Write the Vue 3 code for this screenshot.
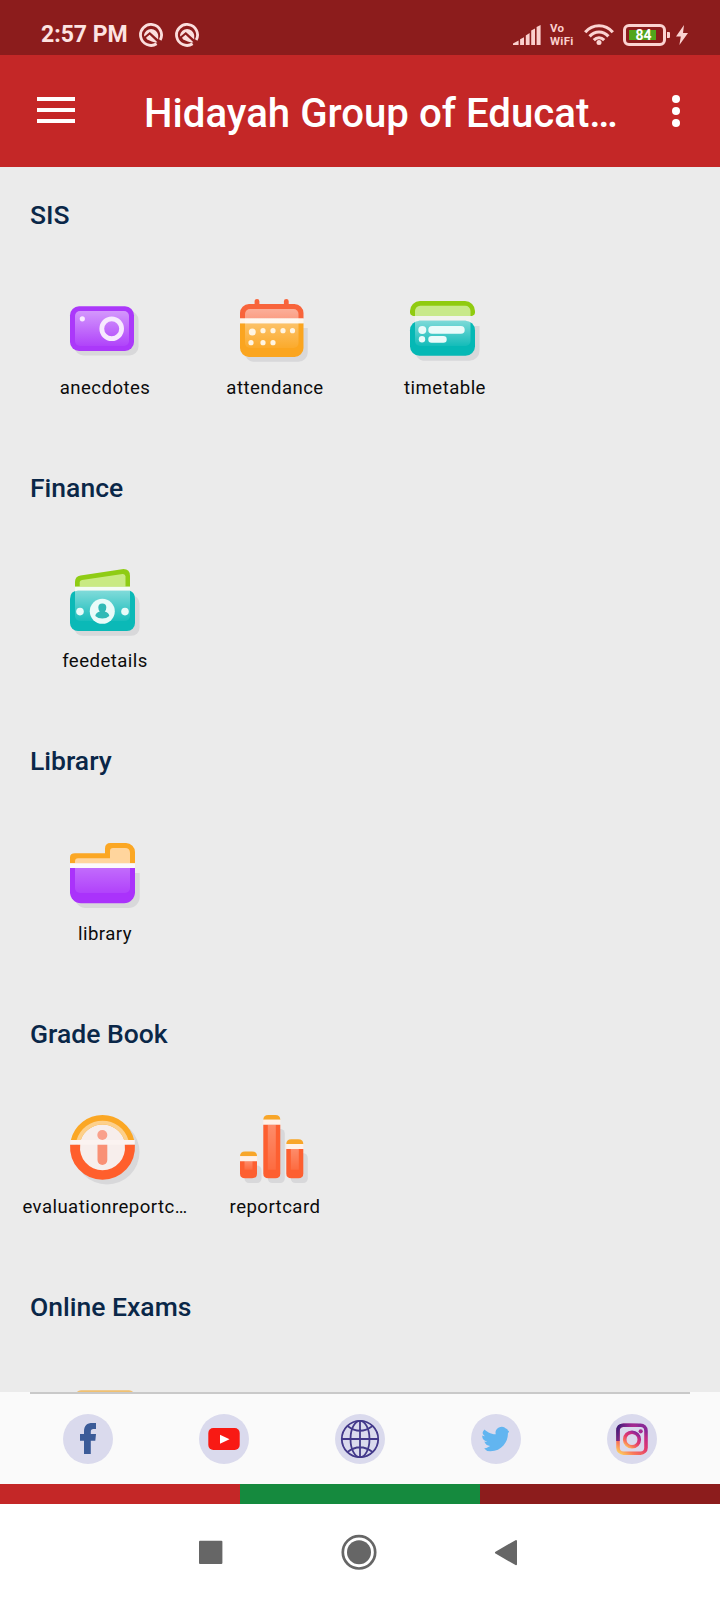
<template>
  <div class="phone">
    <div class="status-bar">
      <span class="clock">2:57 PM</span>
      <svg v-for="n in 2" :key="n" class="badge-icon" viewBox="0 0 24 24">
        <path d="M17.6 20.8A10.5 10.5 0 1 1 21.2 17" fill="none" stroke="#fbdedd" stroke-width="2.8" />
        <path d="M5 12A7.2 7.2 0 0 1 19.2 12V16.6L10.8 9L5.4 13.4Z" fill="#fbdedd" />
        <path d="M7 14.8L10.6 11.8L18.4 19.2Q15 19.8 12.8 18.6L8.2 16.6Z" fill="#fbdedd" />
      </svg>
      <div class="spacer"></div>
      <svg class="signal" viewBox="0 0 28 20">
        <path d="M0 20V18.6L5.6 15.6V20ZM7.1 20V14.2L11 12.2V20ZM12.8 20V10.4L16.6 8V20ZM18.2 20V5.6L22 3.4V20ZM23.6 20V2L27.6 0V20Z" fill="#fbcfcd" />
      </svg>
      <div class="vowifi"><span>Vo</span><span>WiFi</span></div>
      <svg class="wifi" viewBox="0 0 30 21">
        <g fill="none" stroke="#fbd3d1" stroke-width="3.1">
          <path d="M1.2 8.2C8.8 -0.4 21.2 -0.4 28.8 8.2" />
          <path d="M5.6 12.4C10.8 6.6 19.2 6.6 24.4 12.4" />
          <path d="M9.8 16.2C12.9 13 17.1 13 20.2 16.2" />
        </g>
        <circle cx="15" cy="18.5" r="2.5" fill="#fbd3d1" />
      </svg>
      <div class="battery">
        <div class="battery-body"><div class="battery-level">84</div></div>
        <div class="battery-cap"></div>
      </div>
      <svg class="bolt" viewBox="0 0 12 20">
        <path d="M8 0L0 11.6H4.8L3.4 20L12 8H7Z" fill="#fbd3d1" />
      </svg>
    </div>

    <header class="app-bar">
      <button class="menu" aria-label="Menu"><i></i><i></i><i></i></button>
      <h1>Hidayah Group of Educat…</h1>
      <button class="more" aria-label="More"><i></i><i></i><i></i></button>
    </header>

    <svg class="defs" width="0" height="0">
      <defs>
        <linearGradient id="glass" x1="0" y1="0" x2="0" y2="1">
          <stop offset="0" stop-color="#fff" stop-opacity=".48" />
          <stop offset="1" stop-color="#fff" stop-opacity=".06" />
        </linearGradient>
        <linearGradient id="glassSoft" x1="0" y1="0" x2="0" y2="1">
          <stop offset="0" stop-color="#fff" stop-opacity=".28" />
          <stop offset="1" stop-color="#fff" stop-opacity=".08" />
        </linearGradient>
        <linearGradient id="insta" x1="0" y1="1" x2=".7" y2="0">
          <stop offset="0" stop-color="#ffd45e" />
          <stop offset=".25" stop-color="#f9795a" />
          <stop offset=".55" stop-color="#e33c6c" />
          <stop offset=".85" stop-color="#c02b88" />
          <stop offset="1" stop-color="#8c2a96" />
        </linearGradient>
        <linearGradient id="instaFrame" x1="0" y1="0" x2="1" y2=".35">
          <stop offset="0" stop-color="#3b1d78" />
          <stop offset=".5" stop-color="#8a2592" stop-opacity=".85" />
          <stop offset="1" stop-color="#c22e8c" stop-opacity="0" />
        </linearGradient>
      </defs>
    </svg>

    <main class="content">
      <section v-for="group in groups" :key="group.title" class="group">
        <h2>{{ group.title }}</h2>
        <div class="tiles">
          <div v-for="item in group.items" :key="item.label" class="tile">
            <svg v-if="item.icon === 'camera'" class="tile-icon" viewBox="0 0 70 70">
              <rect class="shade" x="4.5" y="15" width="64" height="44.5" rx="9" />
              <rect x="0" y="10.3" width="64" height="44.7" rx="9" fill="#ab38fa" />
              <rect x="5" y="15" width="54" height="35" rx="5" fill="url(#glass)" />
              <circle cx="41.7" cy="32.7" r="9.9" fill="none" stroke="#f7e9fe" stroke-width="4.8" />
              <circle cx="12.3" cy="22.8" r="2.6" fill="#f9eaff" />
            </svg>

            <svg v-else-if="item.icon === 'calendar'" class="tile-icon" viewBox="0 0 70 70">
              <path class="shade" d="M63 32H67.7V56.7A9 9 0 0 1 58.7 65.7H13A9 9 0 0 1 6 61Z" />
              <path d="M17 9V5.3M46.3 9V5.3" stroke="#f8643b" stroke-width="4.8" stroke-linecap="round" />
              <path d="M0 22.5V17A9 9 0 0 1 9 8H54.5A9 9 0 0 1 63.5 17V22.5Z" fill="#f8643b" />
              <path d="M0 27.3H63.5V52A9 9 0 0 1 54.5 61H9A9 9 0 0 1 0 52Z" fill="#fba51f" />
              <path d="M0 22.5H63.5V27.3H0Z" fill="#fff5e9" />
              <rect x="5" y="13" width="53.5" height="39" rx="5" fill="url(#glass)" />
              <g fill="#fff5e3">
                <circle cx="12.3" cy="36" r="3.5" />
                <circle v-for="x in [23, 33, 43, 52.5]" :key="x" :cx="x" cy="34.7" r="2.6" />
                <circle v-for="x in [11, 23, 33]" :key="x" :cx="x" cy="46.7" r="2.6" />
              </g>
            </svg>

            <svg v-else-if="item.icon === 'schedule'" class="tile-icon" viewBox="0 0 70 70">
              <path class="shade" d="M64 30H69.5V54.7A10 10 0 0 1 59.5 64.7H13A10 10 0 0 1 6 59Z" />
              <path d="M0 17V15A10 10 0 0 1 10 5H55A10 10 0 0 1 65 15V17Q65 19 62 20H3Q0 19 0 17Z" fill="#90cb10" />
              <path d="M5 20V15A5.2 5.2 0 0 1 10.2 9.8H55A5.2 5.2 0 0 1 60.5 15V20Z" fill="#c8e98a" />
              <path d="M5 20H60.5V26H5Z" fill="#f1f2ee" />
              <rect x="0" y="24.7" width="65" height="35" rx="9.5" fill="#05b8b5" />
              <path d="M5 24.7H60.5V45A5 5 0 0 1 55.5 50H10A5 5 0 0 1 5 45Z" fill="url(#glass)" />
              <g fill="#eafbfa">
                <circle cx="12.3" cy="34" r="4" />
                <rect x="18.3" y="30" width="36.4" height="7.7" rx="3.8" />
                <circle cx="12" cy="43.3" r="3.2" />
                <rect x="18.3" y="40" width="18.4" height="6.7" rx="3.3" />
              </g>
            </svg>

            <svg v-else-if="item.icon === 'cash'" class="tile-icon" viewBox="0 0 70 70">
              <rect class="shade" x="4.5" y="26.5" width="65" height="40.3" rx="8" />
              <path d="M5 17.7V13Q5 7.4 10.5 6.5L52 0.2Q60 -0.6 60 7V17.7Z" fill="#8fcc14" />
              <path d="M9.7 17.7V13Q10 11.3 12 11L52.5 5Q55.3 4.7 55.5 7.5V17.7Z" fill="#c9ea83" />
              <path d="M5 17.7H60V23H5Z" fill="#f4fbf4" />
              <path d="M8 21.7Q0 21.7 0 30V54A8 8 0 0 0 8 62H57A8 8 0 0 0 65 54V30Q65 23.5 60 21.7Z" fill="#0bb9b7" />
              <path d="M5 21.7H60V47A5 5 0 0 1 55 52H10A5 5 0 0 1 5 47Z" fill="url(#glass)" />
              <g fill="#e9fbf9">
                <circle cx="32.3" cy="42.3" r="12.5" />
                <circle cx="10" cy="42.6" r="3.8" />
                <circle cx="55" cy="42.6" r="3.8" />
              </g>
              <path d="M28.3 38.5A4 4 0 0 1 36.3 38.5Q36.3 41 34.8 42.5Q39 43.5 39.3 47Q36.5 49.6 32.3 49.6T25.3 47Q25.6 43.5 29.8 42.5Q28.3 41 28.3 38.5Z" fill="#31b9b6" />
            </svg>

            <svg v-else-if="item.icon === 'folder'" class="tile-icon" viewBox="0 0 70 70">
              <path class="shade" d="M64 31H69.7V55A11 11 0 0 1 58.7 66H15A11 11 0 0 1 6 60Z" />
              <path d="M0 21.5V15.5Q0 11.3 5 11.3H35V6.5Q35 1 40.5 1H56A9 9 0 0 1 65 10V21.5Z" fill="#fba724" />
              <path d="M5 21.5V19.5Q5 16.3 8 16.3H40V9Q40 6 43 6H55Q60 6 60 11V21.5Z" fill="#ffd59d" />
              <path d="M0 21.3H65V26H0Z" fill="#fcf8fb" />
              <path d="M0 26H65V50.3A11 11 0 0 1 54 61.3H11A11 11 0 0 1 0 50.3Z" fill="#aa32fb" />
              <path d="M5 26H60V46A5 5 0 0 1 55 51H10A5 5 0 0 1 5 46Z" fill="url(#glassSoft)" />
            </svg>

            <svg v-else-if="item.icon === 'info'" class="tile-icon" viewBox="0 0 70 70">
              <circle class="shade" cx="37" cy="37" r="32.5" />
              <circle cx="32.5" cy="32.5" r="25" fill="#f7eeec" />
              <path d="M0.9 25A32.5 32.5 0 0 1 64.1 25H54.2A23 23 0 0 0 10.8 25Z" fill="#fba724" />
              <path d="M6.6 25A27 27 0 0 1 58.4 25H54.2A23 23 0 0 0 10.8 25Z" fill="#fdd08b" />
              <path d="M0.2 25H64.8V29.7H0.2Z" fill="#fbf3f1" />
              <path d="M0.1 29.7H10.2A22.5 22.5 0 1 0 54.8 29.7H64.9A32.5 32.5 0 1 1 0.1 29.7Z" fill="#ff5f2c" />
              <circle cx="32.3" cy="20" r="5" fill="#f9a08b" />
              <path d="M27.5 29.7H37.3V45A4.9 4.9 0 0 1 27.5 45Z" fill="#f99075" />
            </svg>

            <svg v-else-if="item.icon === 'bars'" class="tile-icon" viewBox="0 0 70 70">
              <rect
                v-for="bar in bars"
                :key="bar.x"
                class="shade"
                :x="bar.x + 4.5"
                :y="bar.y + 14"
                width="17"
                :height="54 - bar.y"
                rx="4.5"
              />
              <g v-for="bar in bars" :key="'b' + bar.x" :transform="`translate(${bar.x} ${bar.y})`">
                <path d="M0 4.7Q0 0 5 0H12Q17 0 17 4.7Z" fill="#f8a629" />
                <path d="M0 4.7H17V9.7H0Z" fill="#fff1e8" />
                <path :d="`M0 9.7H17V${58.5 - bar.y}Q17 ${63.3 - bar.y} 12 ${63.3 - bar.y}H5Q0 ${63.3 - bar.y} 0 ${58.5 - bar.y}Z`" fill="#fd5f30" />
                <rect x="4.5" y="9.7" width="8" :height="45 - bar.y" fill="url(#glassSoft)" />
              </g>
            </svg>

            <svg v-else class="tile-icon" viewBox="0 0 70 70">
              <rect x="5" y="2.3" width="60" height="60" rx="6" fill="#f0c071" />
            </svg>
            <span class="label">{{ item.label }}</span>
          </div>
        </div>
      </section>
    </main>

    <footer class="social">
      <div class="rule"></div>
      <div class="links">
        <a class="link">
          <svg viewBox="0 0 50 50">
            <path d="M21 40V26.7H17V20H21V17.5C21 11.5 24 9 29.5 9H33V15H30.5C28.5 15 27.8 16 27.8 17.7V20H33L32.3 26.7H27.8V40Z" fill="#3b5b98" />
          </svg>
        </a>
        <a class="link">
          <svg viewBox="0 0 50 50">
            <rect x="9.3" y="14" width="31.4" height="22" rx="5" fill="#f81a14" />
            <path d="M21 20.8V29.7L30.5 25.3Z" fill="#fff" />
          </svg>
        </a>
        <a class="link">
          <svg viewBox="0 0 50 50" fill="none" stroke="#43398a" stroke-width="1.8">
            <circle cx="25" cy="25" r="18.2" />
            <ellipse cx="25" cy="25" rx="9.5" ry="18.2" />
            <path d="M25 6.7V43.3M6.7 25H43.3M12.5 12Q25 21.5 37.5 12M12.5 38Q25 28.5 37.5 38" />
          </svg>
        </a>
        <a class="link">
          <svg viewBox="0 0 24 24" class="bird">
            <path d="M23.953 4.57a10 10 0 0 1-2.825.775 4.958 4.958 0 0 0 2.163-2.723c-.951.555-2.005.959-3.127 1.184a4.92 4.92 0 0 0-8.384 4.482C7.69 8.095 4.067 6.13 1.64 3.162a4.822 4.822 0 0 0-.666 2.475c0 1.71.87 3.213 2.188 4.096a4.904 4.904 0 0 1-2.228-.616v.06a4.923 4.923 0 0 0 3.946 4.827 4.996 4.996 0 0 1-2.212.085 4.936 4.936 0 0 0 4.604 3.417 9.867 9.867 0 0 1-6.102 2.105c-.39 0-.779-.023-1.17-.067a13.995 13.995 0 0 0 7.557 2.209c9.053 0 13.998-7.496 13.998-13.985 0-.21 0-.42-.015-.63A9.935 9.935 0 0 0 24 4.59z" fill="#62b5f0" />
          </svg>
        </a>
        <a class="link">
          <svg viewBox="0 0 50 50">
            <rect x="11" y="11.2" width="28" height="28" rx="5.5" fill="none" stroke="url(#insta)" stroke-width="3.6" />
            <path d="M11 27V16.7Q11 11.2 16.5 11.2H31" fill="none" stroke="url(#instaFrame)" stroke-width="3.6" />
            <circle cx="25" cy="25.5" r="7.3" fill="none" stroke="url(#insta)" stroke-width="3.6" />
            <circle cx="33.7" cy="17.3" r="2.1" fill="#a92a92" />
          </svg>
        </a>
      </div>
    </footer>

    <div class="stripe"><i></i><i></i><i></i></div>

    <nav class="system-nav">
      <svg viewBox="0 0 36 36"><rect x="6" y="6.7" width="23.4" height="23.2" rx="1" fill="#666" /></svg>
      <svg viewBox="0 0 36 36">
        <circle cx="18" cy="18.3" r="16.2" fill="none" stroke="#666" stroke-width="2.7" />
        <circle cx="18" cy="18.3" r="12" fill="#666" />
      </svg>
      <svg viewBox="0 0 36 36">
        <path d="M7 18.6L27 7V30.2Z" fill="#666" stroke="#666" stroke-width="2" stroke-linejoin="round" />
      </svg>
    </nav>
  </div>
</template>

<script setup>
const groups = [
  {
    title: 'SIS',
    items: [
      { label: 'anecdotes', icon: 'camera' },
      { label: 'attendance', icon: 'calendar' },
      { label: 'timetable', icon: 'schedule' }
    ]
  },
  { title: 'Finance', items: [{ label: 'feedetails', icon: 'cash' }] },
  { title: 'Library', items: [{ label: 'library', icon: 'folder' }] },
  {
    title: 'Grade Book',
    items: [
      { label: 'evaluationreportc…', icon: 'info' },
      { label: 'reportcard', icon: 'bars' }
    ]
  },
  { title: 'Online Exams', items: [{ label: '', icon: 'exam' }] }
]

// bars of the report card icon
const bars = [
  { x: 0, y: 36.5 },
  { x: 23.3, y: 0 },
  { x: 46.3, y: 24.3 }
]
</script>

<style>
body { margin: 0; background: #fff; }
</style>

<style scoped>
.phone {
  width: 720px;
  height: 1600px;
  display: flex;
  flex-direction: column;
  overflow: hidden;
  font-family: Roboto, "Liberation Sans", sans-serif;
  background: #ebebeb;
}
.phone > * { flex-shrink: 0; }
.phone svg { display: block; }
.defs { height: 0; }

.status-bar {
  height: 55px;
  box-sizing: border-box;
  padding: 14px 32px 0 41px;
  display: flex;
  align-items: center;
  background: #8c1c1c;
  color: #fde3e1;
}
.clock { width: 86px; font-size: 23px; font-weight: 700; line-height: 40px; padding-top: 1px; white-space: nowrap; }
.badge-icon { width: 24px; height: 24px; margin-left: 12px; }
.spacer { flex: 1; }
.signal { width: 28px; height: 20px; }
.vowifi {
  display: flex;
  flex-direction: column;
  width: 26px;
  margin-left: 9px;
  font-size: 11.5px;
  font-weight: 700;
  line-height: 12px;
  gap: 1px;
  letter-spacing: .3px;
  color: #fbcfcd;
}
.wifi { width: 30px; height: 21px; margin-left: 8px; }
.battery { display: flex; align-items: center; margin-left: 9px; }
.battery-body {
  width: 43px;
  height: 22px;
  box-sizing: border-box;
  padding: 3px 2px;
  border: 3px solid #fbd3d1;
  border-radius: 6px;
}
.battery-level {
  width: 27px;
  height: 10px;
  margin-left: 1px;
  background: #52a51c;
  color: #fff;
  font-size: 14px;
  font-weight: 700;
  line-height: 11px;
  text-align: center;
  text-indent: 2px;
}
.battery-cap { width: 3px; height: 6px; margin-left: 1px; background: #fbd3d1; border-radius: 0 1px 1px 0; }
.bolt { width: 12px; height: 20px; margin-left: 6px; }

.app-bar {
  height: 112px;
  box-sizing: border-box;
  padding: 0 38px 0 37px;
  display: flex;
  align-items: center;
  background: #c42727;
}
button { padding: 0; border: 0; background: none; display: flex; flex-direction: column; }
.menu { width: 38px; gap: 7px; margin-bottom: 2px; }
.menu i { width: 38px; height: 4px; background: #fff; }
h1 {
  flex: 1;
  margin: 6px 0 0 69px;
  color: #fff;
  font-size: 40.2px;
  font-weight: 500;
  line-height: 56px;
  white-space: nowrap;
}
.more { width: 12px; gap: 4px; align-items: center; }
.more i { width: 8px; height: 8px; border-radius: 50%; background: #fff; }

.content { height: 1225px; overflow: hidden; }
.group { height: 273px; }
h2 {
  margin: 0;
  padding: 31px 30px 0;
  height: 98px;
  color: #0a2748;
  font-size: 26.5px;
  font-weight: 500;
  line-height: 34px;
}
.tiles { display: grid; grid-template-columns: repeat(4, 170px); padding-left: 20px; }
.tile { display: flex; flex-direction: column; align-items: center; }
.tile-icon { width: 70px; height: 70px; overflow: visible; }
.shade { fill: #d8d8da; }
.label { margin-top: 10px; font-size: 18.6px; line-height: 24px; letter-spacing: .45px; color: #0c0c0c; white-space: nowrap; }

.social { height: 92px; background: #fafafa; }
.rule { height: 2px; margin: 0 30px; background: #c9c9c9; }
.links { display: flex; padding: 20px 20px 0; }
.link { flex: 1; display: flex; justify-content: center; }
.link svg { width: 50px; height: 50px; border-radius: 50%; background: #dadaed; }
.link .bird { width: 30px; height: 30px; padding: 10px; }

.stripe { display: flex; height: 20px; }
.stripe i { flex: 1; background: #c42727; }
.stripe i:nth-child(2) { background: #158a3e; }
.stripe i:nth-child(3) { background: #8c1c1c; }

.system-nav {
  height: 96px;
  box-sizing: border-box;
  padding-right: 2px;
  display: flex;
  align-items: center;
  justify-content: center;
  gap: 112px;
  background: #fff;
}
.system-nav svg { width: 36px; height: 36px; }
</style>
